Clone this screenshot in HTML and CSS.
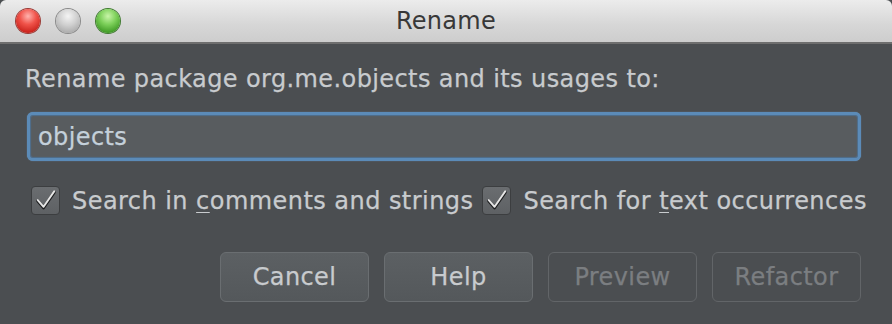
FILE: index.html
```html
<!DOCTYPE html>
<html>
<head>
<meta charset="utf-8">
<link rel="stylesheet" href="styles.css">
</head>
<body>
<div class="window">
  <div class="titlebar">
    <div class="lights">
      <span class="light red"></span>
      <span class="light gray"></span>
      <span class="light green"></span>
    </div>
    <div class="title">Rename</div>
  </div>
  <div class="content">
    <div class="label">Rename package org.me.objects and its usages to:</div>
    <div class="field">objects</div>
    <div class="checks">
      <label class="check"><span class="box"><svg viewBox="0 0 28 28" width="28" height="28"><path d="M6 14 L12 21 L23 5" fill="none" stroke="#1c1d1e" stroke-width="3.2" stroke-linecap="round" stroke-linejoin="round"/><path d="M6 13 L12 20 L23 4" fill="none" stroke="#e6e6e6" stroke-width="2" stroke-linecap="round" stroke-linejoin="round"/></svg></span><span>Search in <u>c</u>omments and strings</span></label>
      <label class="check"><span class="box"><svg viewBox="0 0 28 28" width="28" height="28"><path d="M6 14 L12 21 L23 5" fill="none" stroke="#1c1d1e" stroke-width="3.2" stroke-linecap="round" stroke-linejoin="round"/><path d="M6 13 L12 20 L23 4" fill="none" stroke="#e6e6e6" stroke-width="2" stroke-linecap="round" stroke-linejoin="round"/></svg></span><span>Search for <u>t</u>ext occurrences</span></label>
    </div>
    <div class="buttons">
      <div class="btn">Cancel</div>
      <div class="btn">Help</div>
      <div class="btn disabled">Preview</div>
      <div class="btn disabled">Refactor</div>
    </div>
  </div>
</div>
</body>
</html>
```

FILE: styles.css
```css
* { box-sizing: border-box; }
html, body { margin: 0; padding: 0; }
body {
  width: 892px;
  height: 324px;
  overflow: hidden;
  background: #4b4e51;
  font-family: "DejaVu Sans", "Liberation Sans", sans-serif;
}
.window { width: 892px; height: 324px; display: flex; flex-direction: column; }
.titlebar {
  height: 44px;
  flex: none;
  background: linear-gradient(#ececec, #d6d6d6 60%, #cdcdcd);
  border-bottom: 2px solid #6e6e6e;
  border-top-left-radius: 6px;
  border-top-right-radius: 6px;
  display: flex;
  align-items: center;
  position: relative;
}
.lights { display: flex; gap: 16px; padding-left: 16px; }
.light {
  width: 24px; height: 24px; border-radius: 50%;
  display: block;
}
.light.red {
  background: radial-gradient(circle at 50% 30%, #ffb3ae 0%, #f0534a 40%, #c9221b 80%, #9a1a14 100%);
  box-shadow: 0 0 0 1px #9a3a35;
}
.light.gray {
  background: radial-gradient(circle at 50% 30%, #f4f4f4 0%, #cfcfcf 45%, #a8a8a8 85%, #909090 100%);
  box-shadow: 0 0 0 1px #8a8a8a;
}
.light.green {
  background: radial-gradient(circle at 50% 30%, #c8f5a8 0%, #7dd05a 40%, #3f9a25 80%, #2f7a1b 100%);
  box-shadow: 0 0 0 1px #3f7a2f;
}
.title {
  position: absolute; left: 0; right: 0; top: 0; height: 42px;
  display: flex; align-items: center; justify-content: center;
  font-size: 24px; letter-spacing: 0.3px; color: #383838;
}
.content { padding: 20px 0 0 25px; display: flex; flex-direction: column; }
.label { font-size: 24px; letter-spacing: 0.4px; color: #c8cbce; line-height: 30px; white-space: nowrap; -webkit-text-stroke: 0.25px #c8cbce; }
.field {
  margin-top: 18px;
  margin-left: 2px;
  width: 834px;
  height: 49px;
  border: 3px solid #5b8bb8;
  box-shadow: 0 0 1px 1px #4f6f90 inset, 0 0 1px 0 #6e9cc8;
  border-radius: 6px;
  background: #585c5f;
  padding-left: 8px;
  display: flex; align-items: center;
  font-size: 24px; letter-spacing: 0.4px; color: #c4d0da;
  -webkit-text-stroke: 0.25px #c4d0da;
}
.checks { display: flex; margin-top: 25px; padding-left: 6px; gap: 9px; white-space: nowrap; }
.check { flex: none; display: flex; align-items: center; gap: 12px; font-size: 24px; letter-spacing: 0.45px; color: #c8cbce; -webkit-text-stroke: 0.25px #c8cbce; }
.check u { text-decoration-thickness: 1px; text-underline-offset: 3px; }
.box {
  width: 29px; height: 29px; border-radius: 4px;
  background: linear-gradient(#6a6d70, #5e6164);
  border: 1px solid #3c3e40;
  display: flex; align-items: center; justify-content: center;
  -webkit-text-stroke: 0;
}
.buttons { display: flex; gap: 15px; margin-top: 37px; padding-left: 195px; }
.btn {
  width: 149px; height: 50px;
  border: 1px solid #6a6e71;
  border-radius: 6px;
  background: linear-gradient(#5c6063, #54585b);
  display: flex; align-items: center; justify-content: center;
  font-size: 24px; letter-spacing: 0.4px; color: #c8cbce;
  -webkit-text-stroke: 0.25px #c8cbce;
}
.btn.disabled { background: #4b4e51; border-color: #626568; color: #7b7e81; -webkit-text-stroke: 0.25px #7b7e81; }
```
